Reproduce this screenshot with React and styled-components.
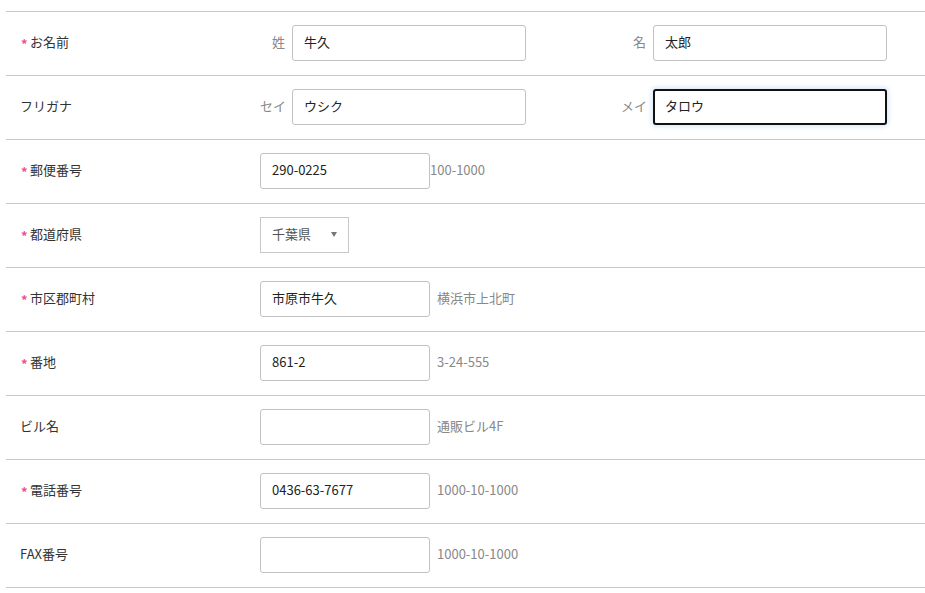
import React from "react";
import styled, { createGlobalStyle } from "styled-components";

const Global = createGlobalStyle`
  html, body { margin: 0; padding: 0; background: #fff; }
  body { font-family: "Noto Sans CJK JP", "Noto Sans", sans-serif; color: #333; }
  * { box-sizing: border-box; }
`;

const Form = styled.div`
  margin: 11px 0 0 6px;
  width: 919px;
  border-top: 1px solid #c8c8c8;
`;

const Row = styled.div`
  display: flex;
  align-items: center;
  height: 64px;
  padding-bottom: 1px;
  border-bottom: 1px solid #c8c8c8;
`;

const Label = styled.div`
  flex: 0 0 254px;
  padding-left: 14px;
  padding-bottom: 4px;
  font-size: 13px;
  color: #333;
  display: flex;
  align-items: center;
`;

const Req = styled.span`
  color: #f0508c;
  font-size: 13px;
  font-weight: 700;
  width: 10px;
  padding-left: 1px;
  line-height: 1;
  margin-top: 5px;
`;

const Field = styled.div`
  display: flex;
  align-items: center;
  flex: 0 0 auto;
`;

const NameGroup = styled.div`
  flex: 0 0 ${(p) => (p.$w ? `${p.$w}px` : "auto")};
  display: flex;
  align-items: center;
`;

const SubLabel = styled.span`
  width: 32px;
  padding-right: 7px;
  padding-bottom: 4px;
  text-align: right;
  font-size: 13px;
  color: #888;
  white-space: nowrap;
`;

const Input = styled.input`
  width: ${(p) => p.$w}px;
  height: 36px;
  padding: 0 ${(p) => (p.$focused ? 10 : 11)}px 3px;
  border: ${(p) => (p.$focused ? "2px solid #111" : "1px solid #c2c2c2")};
  border-radius: 3px;
  box-shadow: ${(p) => (p.$focused ? "0 0 4px 2px rgba(120,170,230,0.25)" : "none")};
  font-family: "Noto Sans CJK JP", "Noto Sans", sans-serif;
  font-size: 13px;
  color: #222;
  background: #fff;
  outline: none;
  caret-color: #111;
`;

const Hint = styled.span`
  margin-left: ${(p) => (p.$tight ? 0 : 7)}px;
  padding-bottom: 4px;
  font-size: 13px;
  color: #888;
  white-space: nowrap;
`;

const Select = styled.div`
  width: 89px;
  height: 36px;
  border: 1px solid #c8c8c8;
  display: flex;
  align-items: center;
  justify-content: space-between;
  padding: 0 11px 0 11px;
  font-size: 13px;
  color: #555;
`;

const SelectText = styled.span`
  padding-bottom: 4px;
`;

const Arrow = styled.span`
  width: 0;
  height: 0;
  border-left: 3.5px solid transparent;
  border-right: 3.5px solid transparent;
  border-top: 5px solid #777;
  margin-bottom: 1px;
`;

function LabelCell({ req, children }) {
  return (
    <Label>
      {req && <Req>*</Req>}
      {children}
    </Label>
  );
}

const simpleRows = [
  { label: "市区郡町村", req: true, value: "市原市牛久", hint: "横浜市上北町" },
  { label: "番地", req: true, value: "861-2", hint: "3-24-555" },
  { label: "ビル名", req: false, value: "", hint: "通販ビル4F" },
  { label: "電話番号", req: true, value: "0436-63-7677", hint: "1000-10-1000" },
  { label: "FAX番号", req: false, value: "", hint: "1000-10-1000" },
];

export default function App() {
  return (
    <>
      <Global />
      <Form>
        <Row>
          <LabelCell req>お名前</LabelCell>
          <Field>
            <NameGroup $w={361}>
              <SubLabel>姓</SubLabel>
              <Input $w={234} defaultValue="牛久" />
            </NameGroup>
            <NameGroup>
              <SubLabel>名</SubLabel>
              <Input $w={234} defaultValue="太郎" />
            </NameGroup>
          </Field>
        </Row>
        <Row>
          <LabelCell>フリガナ</LabelCell>
          <Field>
            <NameGroup $w={361}>
              <SubLabel>セイ</SubLabel>
              <Input $w={234} defaultValue="ウシク" />
            </NameGroup>
            <NameGroup>
              <SubLabel>メイ</SubLabel>
              <Input $w={234} $focused defaultValue="タロウ" autoFocus />
            </NameGroup>
          </Field>
        </Row>
        <Row>
          <LabelCell req>郵便番号</LabelCell>
          <Field>
            <Input $w={170} defaultValue="290-0225" />
            <Hint $tight>100-1000</Hint>
          </Field>
        </Row>
        <Row>
          <LabelCell req>都道府県</LabelCell>
          <Field>
            <Select>
              <SelectText>千葉県</SelectText>
              <Arrow />
            </Select>
          </Field>
        </Row>
        {simpleRows.map((r) => (
          <Row key={r.label}>
            <LabelCell req={r.req}>{r.label}</LabelCell>
            <Field>
              <Input $w={170} defaultValue={r.value} />
              <Hint>{r.hint}</Hint>
            </Field>
          </Row>
        ))}
      </Form>
    </>
  );
}
